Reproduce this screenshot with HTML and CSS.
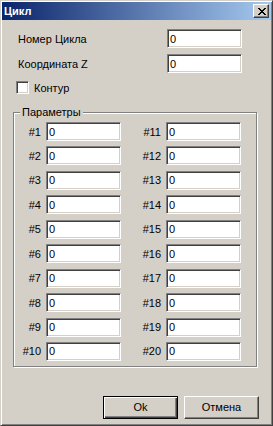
FILE: index.html
```html
<!DOCTYPE html>
<html lang="ru">

<head>
    <meta charset="UTF-8">
    <meta name="viewport" content="width=device-width, initial-scale=1.0">
    <title>Цикл</title>
    <link rel="stylesheet" href="styles.css">
</head>

<body>
    <div class="window">
        <div class="titlebar">
            <span class="title">Цикл</span>
            <button class="close-btn" title="Закрыть">
                <svg width="8" height="7" viewBox="0 0 8 7">
                    <path d="M0 0h2v1h1v1h2v-1h1v-1h2v1h-1v1h-1v1h-1v1h1v1h1v1h1v1h-2v-1h-1v-1h-2v1h-1v1h-2v-1h1v-1h1v-1h1v-1h-1v-1h-1v-1h-1z" fill="#000"/>
                </svg>
            </button>
        </div>

        <div class="content">
            <div class="fields">
                <label for="cycle_num">Номер Цикла</label>
                <input type="text" id="cycle_num" value="0">

                <label for="coord_z">Координата Z</label>
                <input type="text" id="coord_z" value="0">
            </div>

            <div class="check-row">
                <input type="checkbox" id="contour">
                <label for="contour">Контур</label>
            </div>

            <fieldset class="group">
                <legend>Параметры</legend>
                <div class="params">
                    <label>#1</label><input type="text" value="0">
                    <label>#11</label><input type="text" value="0">
                    <label>#2</label><input type="text" value="0">
                    <label>#12</label><input type="text" value="0">
                    <label>#3</label><input type="text" value="0">
                    <label>#13</label><input type="text" value="0">
                    <label>#4</label><input type="text" value="0">
                    <label>#14</label><input type="text" value="0">
                    <label>#5</label><input type="text" value="0">
                    <label>#15</label><input type="text" value="0">
                    <label>#6</label><input type="text" value="0">
                    <label>#16</label><input type="text" value="0">
                    <label>#7</label><input type="text" value="0">
                    <label>#17</label><input type="text" value="0">
                    <label>#8</label><input type="text" value="0">
                    <label>#18</label><input type="text" value="0">
                    <label>#9</label><input type="text" value="0">
                    <label>#19</label><input type="text" value="0">
                    <label>#10</label><input type="text" value="0">
                    <label>#20</label><input type="text" value="0">
                </div>
            </fieldset>

            <div class="buttons">
                <button class="btn default">Ok</button>
                <button class="btn">Отмена</button>
            </div>
        </div>
    </div>
</body>

</html>
```

FILE: styles.css
```css
body {
    margin: 0;
    padding: 0;
    background: #d4d0c8;
    font-family: "Liberation Sans", Arial, sans-serif;
    font-size: 11px;
    color: #000;
}

.window {
    box-sizing: border-box;
    width: 273px;
    height: 426px;
    padding: 1px;
    background: #d4d0c8;
    border: 1px solid;
    border-color: #d4d0c8 #404040 #404040 #d4d0c8;
    box-shadow: inset 1px 1px 0 #fff, inset -1px -1px 0 #808080;
}

/* title bar */
.titlebar {
    height: 18px;
    display: flex;
    align-items: center;
    justify-content: space-between;
    padding-left: 2px;
    padding-right: 2px;
    background: linear-gradient(to right, #0a246a, #a6caf0);
}

.title {
    color: #fff;
    font-weight: bold;
    font-size: 11px;
    line-height: 13px;
}

.close-btn {
    box-sizing: border-box;
    width: 16px;
    height: 14px;
    padding: 0;
    display: flex;
    align-items: center;
    justify-content: center;
    background: #d4d0c8;
    border: 1px solid;
    border-color: #fff #404040 #404040 #fff;
    box-shadow: inset -1px -1px 0 #808080;
}

.close-btn svg {
    display: block;
    margin-left: 1px;
}

/* text fields */
input[type="text"] {
    box-sizing: border-box;
    width: 75px;
    height: 19px;
    margin: 0;
    padding: 0 2px;
    font-family: inherit;
    font-size: 11px;
    color: #000;
    background: #fff;
    border: 1px solid;
    border-color: #808080 #fff #fff #808080;
    box-shadow: inset 1px 1px 0 #404040, inset -1px -1px 0 #d4d0c8;
    outline: none;
}

.fields {
    display: grid;
    grid-template-columns: 149px 75px;
    grid-auto-rows: 19px;
    row-gap: 6px;
    align-items: center;
    margin-top: 9px;
    padding-left: 16px;
}

.check-row {
    display: flex;
    align-items: center;
    gap: 5px;
    height: 13px;
    margin-top: 8px;
    padding-left: 14px;
}

input[type="checkbox"] {
    appearance: none;
    box-sizing: border-box;
    width: 13px;
    height: 13px;
    margin: 0;
    background: #fff;
    border: 1px solid;
    border-color: #808080 #fff #fff #808080;
    box-shadow: inset 1px 1px 0 #404040, inset -1px -1px 0 #d4d0c8;
}

/* group box */
.group {
    box-sizing: border-box;
    width: 244px;
    margin: 12px 0 0 11px;
    padding: 3px 0 5px 0;
    border: 1px solid #808080;
    box-shadow: inset 1px 1px 0 #fff, 1px 1px 0 #fff;
}

.group legend {
    margin-left: 6px;
    padding: 0 2px;
    line-height: 13px;
    background: #d4d0c8;
}

.params {
    display: grid;
    grid-template-columns: 27px 75px 35px 75px;
    grid-auto-rows: 19px;
    column-gap: 5px;
    row-gap: 5.45px;
    align-items: center;
}

.params label {
    text-align: right;
}

/* buttons */
.buttons {
    display: flex;
    justify-content: flex-end;
    gap: 6px;
    margin-top: 29px;
    padding-right: 12px;
}

.btn {
    box-sizing: border-box;
    width: 75px;
    height: 23px;
    padding: 0;
    font-family: inherit;
    font-size: 11px;
    color: #000;
    background: #d4d0c8;
    border: 1px solid;
    border-color: #fff #404040 #404040 #fff;
    box-shadow: inset -1px -1px 0 #808080;
}

.btn.default {
    border: 1px solid #000;
    box-shadow: inset 1px 1px 0 #fff, inset -1px -1px 0 #404040, inset -2px -2px 0 #808080;
}
```
